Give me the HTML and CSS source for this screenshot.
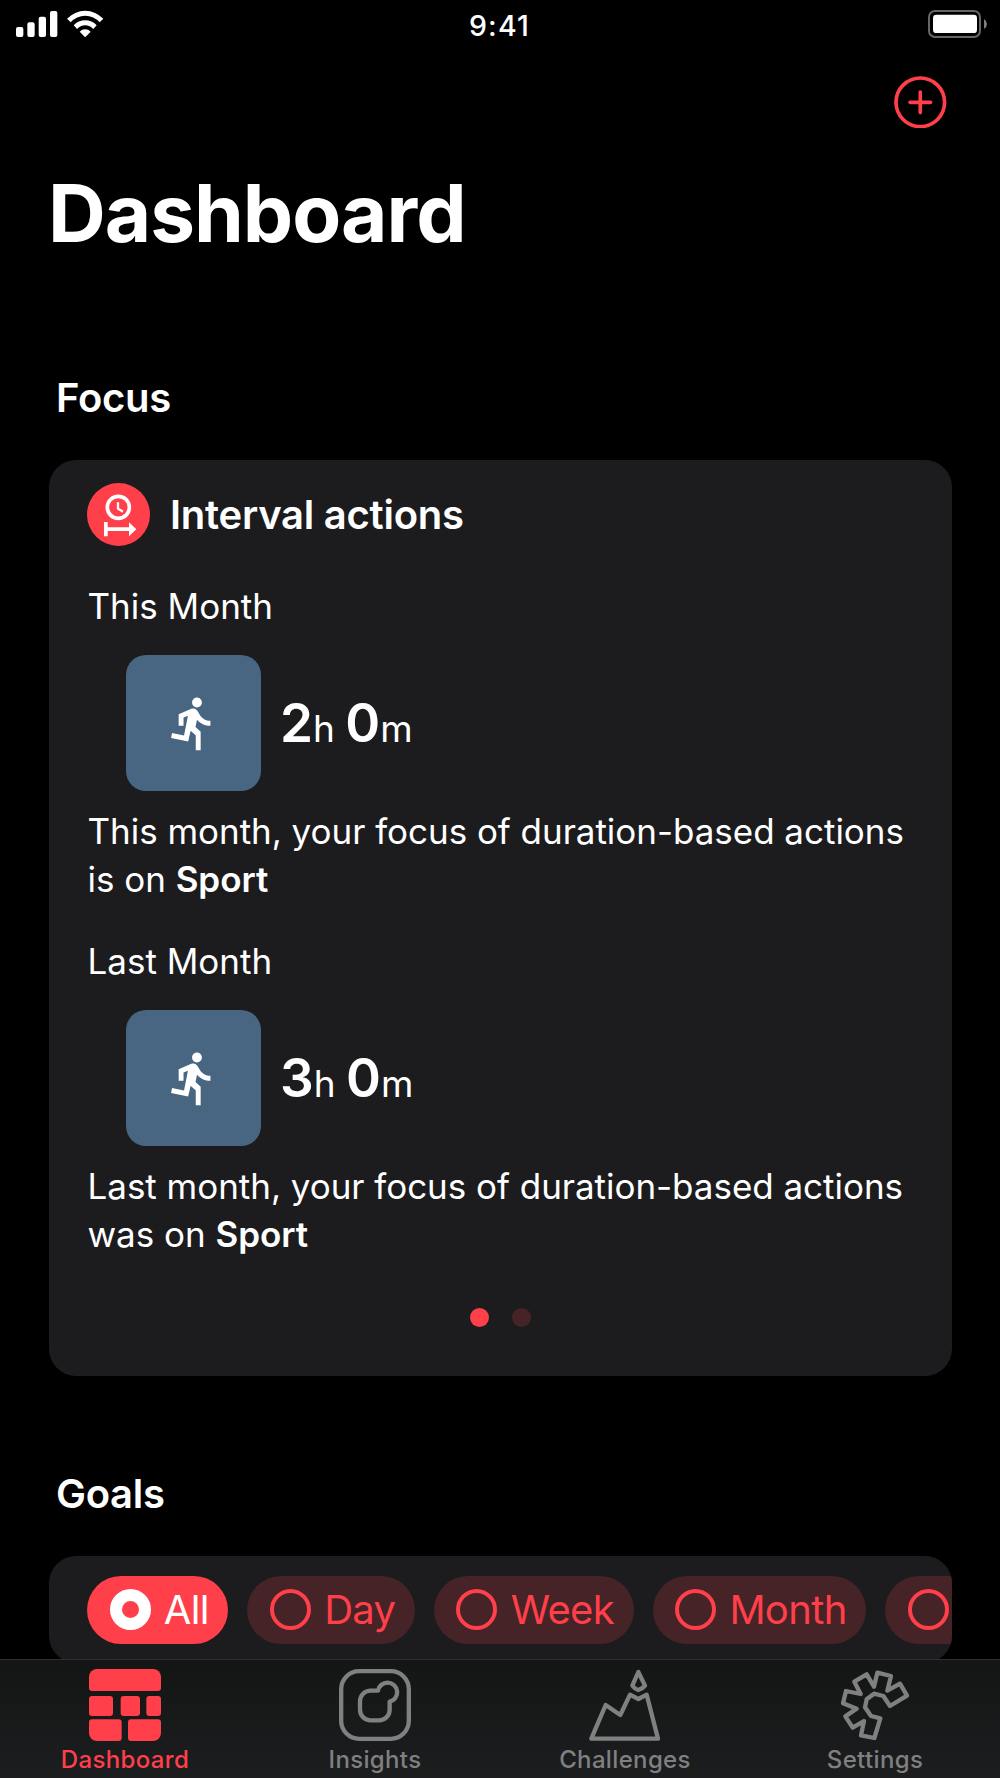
FILE: index.html
```html
<!DOCTYPE html>
<html lang="en">
<head>
    <meta charset="UTF-8">
    <meta name="viewport" content="width=device-width, initial-scale=1.0">
    <title>Dashboard</title>
    <link rel="stylesheet" href="styles.css">
</head>
<body>
    <header class="status-bar">
        <div class="status-left">
            <svg class="signal" viewBox="0 0 125 78">
                <rect x="0" y="48" width="22" height="30" rx="6"/>
                <rect x="34" y="34" width="22" height="44" rx="6"/>
                <rect x="68" y="17" width="22" height="61" rx="6"/>
                <rect x="102" y="0" width="22" height="78" rx="6"/>
            </svg>
            <svg class="wifi" viewBox="0 0 110 82">
                <path d="M0 26 A75 75 0 0 1 109 26 L98 37 A58 58 0 0 0 11 37 Z"/>
                <path d="M20 46 A47 47 0 0 1 89 46 L79 57 A32 32 0 0 0 30 57 Z"/>
                <path d="M38 65 A22 22 0 0 1 71 65 L54.5 82 Z"/>
            </svg>
        </div>
        <div class="time">9:41</div>
        <svg class="battery" viewBox="0 0 177 84">
            <rect x="3" y="3" width="153" height="78" rx="18" fill="none" stroke="#666" stroke-width="6"/>
            <rect x="15" y="14" width="132" height="55" rx="10" fill="#fff"/>
            <path d="M168 27 Q177 33 177 42 Q177 51 168 57 Z" fill="#808080"/>
        </svg>
    </header>

    <div class="nav">
        <svg class="add" viewBox="0 0 158 158">
            <circle cx="79" cy="79" r="73"/>
            <path d="M79 48 V110 M48 79 H110"/>
        </svg>
    </div>

    <h1>Dashboard</h1>

    <h2>Focus</h2>
    <section class="card focus">
        <div class="card-head">
            <svg class="interval" viewBox="0 0 189 189">
                <circle cx="94.5" cy="94.5" r="94.5" fill="#ff3f4a"/>
                <circle cx="94" cy="73" r="33" fill="none" stroke="#fff" stroke-width="11"/>
                <path d="M93 58 V77 L108 86" fill="none" stroke="#fff" stroke-width="7"/>
                <path d="M51 117 H62 V133 H126 V118 L148 139 L126 160 V144 H62 V160 H51 Z" fill="#fff"/>
            </svg>
            <h3>Interval actions</h3>
        </div>

        <div class="period">
            <p class="label">This Month</p>
            <div class="result">
                <div class="tile">
                    <svg viewBox="0 0 24 24"><path d="M13.49 5.48c1.1 0 2-.9 2-2s-.9-2-2-2-2 .9-2 2 .9 2 2 2zm-3.6 13.9l1-4.4 2.1 2v6h2v-7.5l-2.1-2 .6-3c1.3 1.5 3.3 2.5 5.5 2.5v-2c-1.9 0-3.5-1-4.3-2.4l-1-1.6c-.4-.6-1-1-1.7-1-.3 0-.5.1-.8.1l-5.2 2.2v4.7h2v-3.4l1.8-.7-1.6 8.1-4.9-1-.4 2 7 1.4z"/></svg>
                </div>
                <div class="duration"><b>2</b>h <b>0</b>m</div>
            </div>
            <p class="summary">This month, your focus of duration-based actions<br>is on <b>Sport</b></p>
        </div>

        <div class="period">
            <p class="label">Last Month</p>
            <div class="result">
                <div class="tile">
                    <svg viewBox="0 0 24 24"><path d="M13.49 5.48c1.1 0 2-.9 2-2s-.9-2-2-2-2 .9-2 2 .9 2 2 2zm-3.6 13.9l1-4.4 2.1 2v6h2v-7.5l-2.1-2 .6-3c1.3 1.5 3.3 2.5 5.5 2.5v-2c-1.9 0-3.5-1-4.3-2.4l-1-1.6c-.4-.6-1-1-1.7-1-.3 0-.5.1-.8.1l-5.2 2.2v4.7h2v-3.4l1.8-.7-1.6 8.1-4.9-1-.4 2 7 1.4z"/></svg>
                </div>
                <div class="duration"><b>3</b>h <b>0</b>m</div>
            </div>
            <p class="summary">Last month, your focus of duration-based actions<br>was on <b>Sport</b></p>
        </div>

        <div class="dots">
            <span class="dot active"></span>
            <span class="dot"></span>
        </div>
    </section>

    <h2 class="goals-title">Goals</h2>
    <section class="card goals">
        <div class="pill selected"><span class="radio"></span>All</div>
        <div class="pill"><span class="radio"></span>Day</div>
        <div class="pill"><span class="radio"></span>Week</div>
        <div class="pill"><span class="radio"></span>Month</div>
        <div class="pill last"><span class="radio"></span></div>
    </section>

    <nav class="tab-bar">
        <div class="tab current">
            <svg viewBox="0 0 216 216">
                <path d="M24 0 H192 A24 24 0 0 1 216 24 V57 A9 9 0 0 1 207 66 H9 A9 9 0 0 1 0 57 V24 A24 24 0 0 1 24 0 Z"/>
                <rect x="0" y="81" width="72" height="60" rx="9"/>
                <rect x="95" y="81" width="58" height="60" rx="9"/>
                <rect x="172" y="81" width="44" height="60" rx="9"/>
                <path d="M9 151 H89 A9 9 0 0 1 98 160 V207 A9 9 0 0 1 89 216 H24 A24 24 0 0 1 0 192 V160 A9 9 0 0 1 9 151 Z"/>
                <path d="M126 151 H207 A9 9 0 0 1 216 160 V192 A24 24 0 0 1 192 216 H126 A9 9 0 0 1 117 207 V160 A9 9 0 0 1 126 151 Z"/>
            </svg>
            <span>Dashboard</span>
        </div>
        <div class="tab">
            <svg class="outline" viewBox="0 0 216 216">
                <rect x="6.5" y="6.5" width="203" height="203" rx="54"/>
                <path d="M95 65 H117 A29 29 0 1 1 152 98 V122 A32 32 0 0 1 120 154 H95 A32 32 0 0 1 63 122 V97 A32 32 0 0 1 95 65 Z"/>
            </svg>
            <span>Insights</span>
        </div>
        <div class="tab">
            <svg class="outline" viewBox="0 0 216 216">
                <path d="M7 209 L50 108 L94 138 L123 77 L148 90 L173 77 L207 209 Z"/>
                <path d="M148 9 L130 50 Q136 59 148 63 Q161 59 168 50 Z"/>
            </svg>
            <span>Challenges</span>
        </div>
        <div class="tab">
            <svg class="outline" viewBox="0 0 216 216">
                <path d="M183 44 L204 80 L153 111 L133 81 L105 74 L83 91 L78 115 L96 141 L124 148 L106 207 L66 199 L75 156 L41 176 L19 142 L53 119 L12 103 L21 66 L65 75 L46 38 L83 16 L105 53 L115 11 L156 21 L145 65 Z"/>
            </svg>
            <span>Settings</span>
        </div>
    </nav>
</body>
</html>
```

FILE: styles.css
```css
* {
    box-sizing: border-box;
    margin: 0;
    padding: 0;
}

body {
    width: 1000px;
    height: 1778px;
    overflow: hidden;
    background-color: #000;
    color: #fff;
    font-family: Inter, "Liberation Sans", sans-serif;
}

svg {
    display: block;
    flex: none;
}

.status-bar {
    display: grid;
    grid-template-columns: 1fr auto 1fr;
    height: 50px;
    padding: 0 13px 0 16px;
}

.status-left {
    display: flex;
    padding-top: 10px;
    fill: #fff;
}

.signal {
    width: 41.7px;
    height: 26px;
    margin-top: 1.3px;
}

.wifi {
    width: 36.7px;
    height: 27.3px;
    margin-left: 9.7px;
}

.time {
    margin-left: -4px;
    font-size: 28.5px;
    font-weight: 500;
    letter-spacing: 1.2px;
    line-height: 51px;
}

.battery {
    width: 59px;
    height: 28px;
    margin-top: 10.3px;
    justify-self: end;
}

.nav {
    display: flex;
    justify-content: flex-end;
    height: 115px;
    padding: 25.7px 53.2px 0 0;
}

.add {
    width: 52.6px;
    height: 52.6px;
    fill: none;
    stroke: #ff3f4a;
    stroke-width: 11;
    stroke-linecap: round;
}

h1 {
    margin-left: 48px;
    font-size: 80px;
    font-weight: 700;
    letter-spacing: -1px;
    line-height: 96px;
}

h2 {
    margin: 113px 0 38px 56px;
    font-size: 40px;
    font-weight: 600;
    letter-spacing: -0.3px;
    line-height: 48px;
}

.goals-title {
    margin-top: 93.5px;
    margin-bottom: 38.5px;
}

.card {
    width: 903px;
    margin-left: 48.5px;
    background-color: #1c1c1e;
    border-radius: 27px;
    overflow: hidden;
}

.focus {
    height: 916px;
    padding: 23px 38.5px 0;
}

.card-head {
    display: flex;
    align-items: center;
    gap: 20px;
}

.interval {
    width: 63px;
    height: 63px;
}

h3 {
    font-size: 40px;
    font-weight: 600;
    letter-spacing: -0.25px;
    line-height: 48px;
}

.period {
    height: 355px;
    padding-top: 36px;
    font-size: 35px;
}

.label {
    padding-left: 0.5px;
    line-height: 48px;
}

.result {
    display: flex;
    align-items: center;
    gap: 19px;
    margin: 25.3px 0 16.5px 38.5px;
}

.tile {
    display: flex;
    align-items: center;
    justify-content: center;
    width: 135.5px;
    height: 135.5px;
    background-color: #486581;
    border-radius: 20px;
}

.tile svg {
    width: 58.7px;
    height: 58.7px;
    fill: #fff;
}

.duration {
    padding-top: 6px;
    font-size: 37px;
    line-height: 64px;
}

.duration b {
    font-size: 53px;
    font-weight: 600;
}

.summary {
    padding-left: 0.5px;
    letter-spacing: -0.03px;
    line-height: 48px;
    white-space: nowrap;
}

.summary b {
    font-weight: 600;
}

.dots {
    display: flex;
    justify-content: center;
    gap: 23px;
    margin-top: 51.5px;
}

.dot {
    width: 19px;
    height: 19px;
    border-radius: 50%;
    background-color: #452327;
}

.dot.active {
    background-color: #ff3f4a;
}

.goals {
    display: flex;
    gap: 19px;
    height: 107px;
    padding: 20px 0 0 38.5px;
}

.pill {
    display: flex;
    align-items: center;
    flex: none;
    gap: 13.3px;
    height: 67.5px;
    padding: 0 19.5px 0 22.5px;
    background-color: #452327;
    border-radius: 34px;
    color: #ff3f4a;
    font-size: 40px;
    letter-spacing: -0.65px;
}

.pill.last {
    width: 150px;
}

.radio {
    width: 41px;
    height: 41px;
    border: 4px solid #ff3f4a;
    border-radius: 50%;
}

.selected {
    background-color: #ff3f4a;
    color: #fff;
}

.selected .radio {
    border: 12px solid #fff;
}

.tab-bar {
    position: fixed;
    left: 0;
    bottom: 0;
    display: flex;
    width: 1000px;
    height: 119px;
    border-top: 1px solid #303032;
    background: linear-gradient(#141615, #1c1d1f);
}

.tab {
    display: flex;
    flex: 1;
    flex-direction: column;
    align-items: center;
    padding-top: 9px;
    color: #808080;
    font-size: 24px;
    font-weight: 500;
    letter-spacing: 0.35px;
}

.tab svg {
    width: 72px;
    height: 72px;
    margin-bottom: 4px;
    fill: #ff3f4a;
}

.tab .outline {
    fill: none;
    stroke: #808080;
    stroke-width: 13;
    stroke-linejoin: round;
}

.tab span {
    line-height: 30px;
}

.current {
    color: #ff3f4a;
}
```
